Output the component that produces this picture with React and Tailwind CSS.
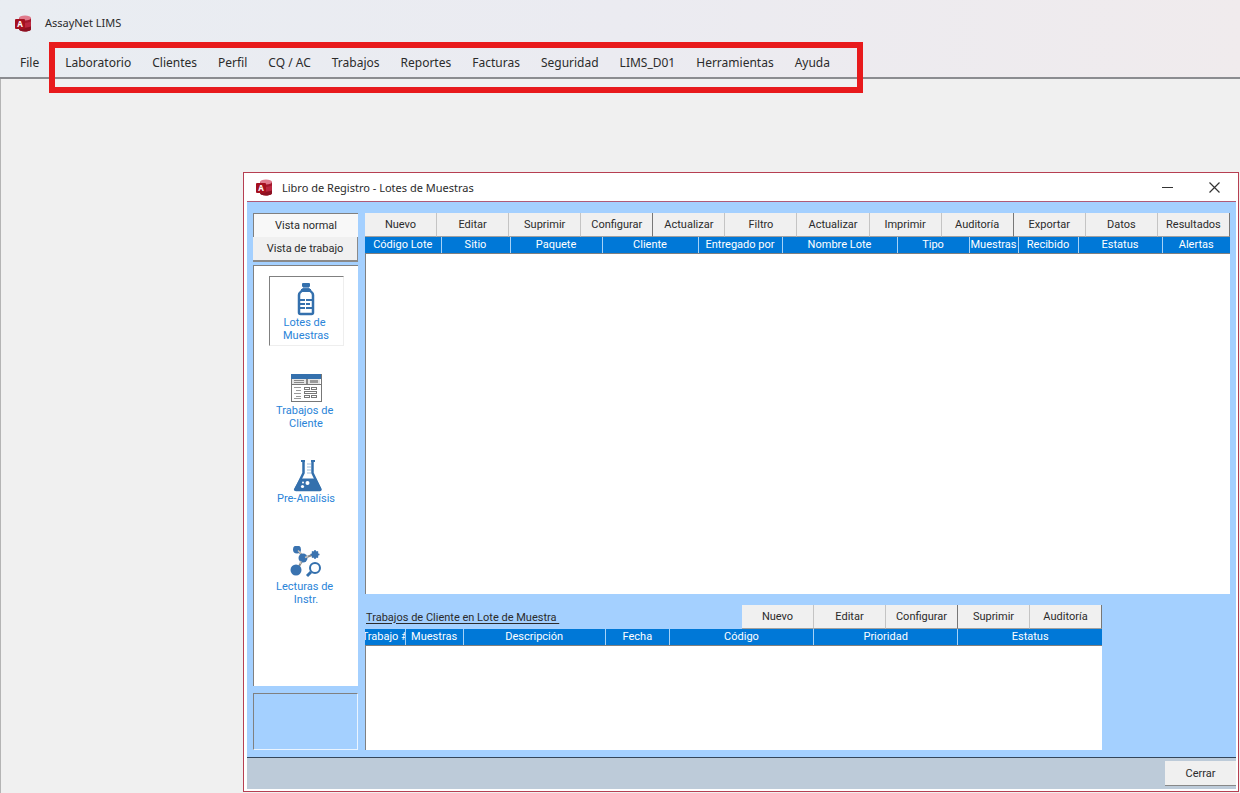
import React from "react";

const menus = [
  "Laboratorio",
  "Clientes",
  "Perfil",
  "CQ / AC",
  "Trabajos",
  "Reportes",
  "Facturas",
  "Seguridad",
  "LIMS_D01",
  "Herramientas",
  "Ayuda",
];

// "end" closes a group of buttons with a darker edge
const batchActions = [
  { label: "Nuevo" },
  { label: "Editar" },
  { label: "Suprimir" },
  { label: "Configurar", end: true },
  { label: "Actualizar" },
  { label: "Filtro" },
  { label: "Actualizar" },
  { label: "Imprimir" },
  { label: "Auditoría", end: true },
  { label: "Exportar" },
  { label: "Datos" },
  { label: "Resultados", end: true },
];

const jobActions = [
  { label: "Nuevo" },
  { label: "Editar" },
  { label: "Configurar", end: true },
  { label: "Suprimir" },
  { label: "Auditoría", end: true },
];

const batchColumns = [
  { label: "Código Lote", width: "w-[76px]" },
  { label: "Sitio", width: "w-[69px]" },
  { label: "Paquete", width: "w-[92px]" },
  { label: "Cliente", width: "w-[96px]" },
  { label: "Entregado por", width: "w-[84px]" },
  { label: "Nombre Lote", width: "w-[115px]" },
  { label: "Tipo", width: "w-[72px]" },
  { label: "Muestras", width: "w-[49px]" },
  { label: "Recibido", width: "w-[60px]" },
  { label: "Estatus", width: "w-[84px]" },
  { label: "Alertas", width: "w-[68px]" },
];

const jobColumns = [
  { label: "Trabajo #", width: "w-[40px]" },
  { label: "Muestras", width: "w-[58px]" },
  { label: "Descripción", width: "w-[142px]" },
  { label: "Fecha", width: "w-[64px]" },
  { label: "Código", width: "w-[144px]" },
  { label: "Prioridad", width: "w-[144px]" },
  { label: "Estatus", width: "w-[144px]" },
];

const AccessIcon = () => (
  <svg width="17" height="17" viewBox="0 0 17 17" aria-hidden="true">
    <path d="M5 3v11c0 1.500 2.500 2.500 6 2.500s6-1 6-2.500V3z" fill="#a3182c" />
    <path d="M5 7v4.500c2 1.500 9 1.500 12 0V6.500c-3 1.500-8 2-12 .5z" fill="#bb2740" />
    <path d="M5 12v2c0 1.500 2.500 2.500 6 2.500s6-1 6-2.500v-2.500c-3 1.500-8 2-12 .5z" fill="#8c1122" />
    <ellipse cx="11" cy="3" rx="6" ry="2.500" fill="#e07b8d" />
    <rect x="1" y="4" width="10" height="10" rx="1" fill="#a5101f" />
    <text x="6" y="12" textAnchor="middle" fontSize="8" fontWeight="700" fill="#fff" fontFamily="Noto Sans, sans-serif">
      A
    </text>
  </svg>
);

const BottleIcon = () => (
  <svg width="34" height="34" viewBox="0 0 34 34" fill="#3470ad" aria-hidden="true">
    <rect x="13" y="1" width="8" height="4" rx="1" />
    <rect x="14" y="5" width="6" height="2" fill="#7fa5cf" />
    <path
      d="M14 7.500C13 9.500 10 10 10 13v17.500c0 1 .8 1.500 1.500 1.500h11c.8 0 1.500-.5 1.500-1.500V13c0-3-3-3.500-4-5.500z"
      fill="none"
      stroke="#3470ad"
      strokeWidth="2.500"
    />
    <rect x="12" y="7" width="10" height="3" />
    <rect x="10" y="17" width="6" height="2" />
    <rect x="17" y="17" width="7" height="2" />
    <rect x="10" y="21" width="6" height="2" />
    <rect x="17" y="21" width="4" height="2" />
    <rect x="10" y="25" width="6" height="2" />
    <rect x="17" y="25" width="7" height="2" />
    <rect x="10" y="31" width="14" height="2" />
  </svg>
);

const FormIcon = () => (
  <svg width="34" height="34" viewBox="0 0 34 34" shapeRendering="crispEdges" aria-hidden="true">
    <rect x="2" y="4" width="30" height="27" fill="#fff" stroke="#777" />
    <rect x="2" y="4" width="30" height="5" fill="#3470ad" />
    <rect x="3" y="9" width="28" height="5" fill="#e4e4e4" />
    <rect x="5" y="10" width="10" height="1" fill="#888" />
    <rect x="5" y="12" width="10" height="1" fill="#888" />
    <rect x="17" y="9" width="2" height="6" fill="#888" />
    <rect x="21" y="10" width="8" height="3" fill="#999" />
    <rect x="2" y="14" width="30" height="1" fill="#777" />
    <g fill="#999">
      <rect x="5" y="17" width="7" height="1" />
      <rect x="7" y="20" width="5" height="1" />
      <rect x="5" y="23" width="7" height="1" />
      <rect x="7" y="26" width="5" height="1" />
      <rect x="5" y="28" width="7" height="1" />
    </g>
    <g fill="none" stroke="#777">
      <rect x="15.500" y="17.500" width="5" height="2" />
      <rect x="22.500" y="17.500" width="5" height="2" />
      <rect x="15.500" y="21.500" width="12" height="2" />
      <rect x="15.500" y="25.500" width="5" height="2" />
      <rect x="22.500" y="25.500" width="5" height="2" />
    </g>
  </svg>
);

const FlaskIcon = () => (
  <svg width="34" height="34" viewBox="0 0 34 34" aria-hidden="true">
    <path d="M12 3h4M22 3h4" stroke="#3470ad" strokeWidth="2" />
    <path d="M14.500 3v12L7 30.500c-.5 1 0 1.500 1 1.500h22c1 0 1.500-.5 1-1.500L23.500 15V3" fill="none" stroke="#3470ad" strokeWidth="2.500" />
    <path d="M18 6h4M18 9h4M18 12h4M18 15h4" stroke="#9dbbda" />
    <path d="M11 20.500h16l5.500 10.500c.5 1.500-.5 2-1.500 2H7c-1.500 0-2.500-.5-2-2z" fill="#3470ad" />
    <circle cx="18.500" cy="25" r="2" fill="#fff" />
    <circle cx="13.500" cy="28.500" r="1.600" fill="#fff" />
    <circle cx="14" cy="24.500" r="1" fill="#fff" />
  </svg>
);

const MoleculeIcon = () => (
  <svg width="34" height="34" viewBox="0 0 34 34" aria-hidden="true">
    <path d="M8 3l7 9 11-4M14 13L8 24" fill="none" stroke="#8a8a8a" strokeWidth="2" />
    <g fill="#3a73b0">
      <circle cx="8" cy="3.500" r="4" />
      <circle cx="14" cy="12" r="4.500" />
      <circle cx="26" cy="8.500" r="3.500" />
      <circle cx="7" cy="24" r="5.500" />
    </g>
    <path d="M26 4v9M21.500 8.500h9M23 5.500l6 6M29 5.500l-6 6" stroke="#3a73b0" strokeWidth="1.500" />
    <path d="M9 4.500l3 3M16 11.500l3-1M12 15l-1 3" stroke="#c9c4bd" strokeWidth="1.500" />
    <circle cx="26" cy="22" r="5" fill="none" stroke="#3470ad" strokeWidth="2" />
    <path d="M22 26l-4 4" stroke="#3470ad" strokeWidth="3" />
  </svg>
);

const sections = [
  { label: "Lotes de \nMuestras", Icon: BottleIcon, active: true },
  { label: "Trabajos de \nCliente", Icon: FormIcon },
  { label: "Pre-Analísis", Icon: FlaskIcon },
  { label: "Lecturas de \nInstr.", Icon: MoleculeIcon },
];

const Toolbar = ({ actions }) => (
  <div className="flex">
    {actions.map((action, i) => (
      <button
        key={i}
        type="button"
        className={`h-6 min-w-[72px] flex-1 border-r border-b border-b-[#a0a0a0] bg-[#f0f0f0] text-center ${
          action.end ? "border-r-[#777]" : "border-r-[#c4c4c4]"
        }`}
      >
        {action.label}
      </button>
    ))}
  </div>
);

const ListView = ({ columns, label, className }) => (
  <div className={`flex flex-col ${className}`}>
    <table className="w-full table-fixed border-collapse bg-[#0078d7] text-white" aria-label={label}>
      <thead>
        <tr>
          {columns.map((col) => (
            <th
              key={col.label}
              className={`${col.width} h-4 overflow-hidden border-r border-[#a6d2f7] p-0 font-normal last:border-r-0`}
            >
              <span className="flex justify-center overflow-hidden leading-4 whitespace-nowrap">{col.label}</span>
            </th>
          ))}
        </tr>
      </thead>
    </table>
    <div className="flex-1 border-t border-l border-[#808080] bg-white" />
  </div>
);

const App = () => {
  return (
    <div className="flex min-h-screen flex-col bg-[#f0f0f0] font-['Noto_Sans',sans-serif] text-[#2b2b2b]">
      <header className="border-b-2 border-[#8b8c90] bg-linear-to-r from-[#e9edf2] via-[#ebebf1] to-[#f0ebed]">
        <div className="flex h-[46px] items-center gap-[14px] pl-[14px] text-[11px]">
          <AccessIcon />
          <span>AssayNet LIMS</span>
        </div>
        <nav className="flex h-[31px] items-center pt-[2px] pl-5 text-[12px] leading-5 whitespace-nowrap">
          <a href="#file">File</a>
          <div className="relative ml-[26px] flex gap-[21px]">
            {menus.map((menu) => (
              <a key={menu} href={`#${menu}`}>
                {menu}
              </a>
            ))}
            <div className="pointer-events-none absolute -top-[11px] -right-[33px] -bottom-5 -left-4 border-6 border-[#e81a1c]" />
          </div>
        </nav>
      </header>

      <main className="flex flex-1 flex-col border-l border-[#b4b4b4] pt-[93px] pb-px pl-[242px]">
        <section className="mr-px flex flex-1 flex-col border border-[#b63f52] bg-white pr-[2px] pb-[2px] pl-[3px] font-['Roboto',sans-serif] text-[11px] leading-[13px]">
          <div className="flex h-7 items-center gap-[10px] pr-4 pl-2">
            <AccessIcon />
            <h1 className="flex-1 font-['Noto_Sans',sans-serif]">Libro de Registro - Lotes de Muestras</h1>
            <div className="flex items-center gap-9">
              <button type="button" aria-label="Minimizar">
                <svg width="11" height="11" viewBox="0 0 11 11" stroke="#333">
                  <path d="M0 5.500h11" />
                </svg>
              </button>
              <button type="button" aria-label="Cerrar ventana">
                <svg width="11" height="11" viewBox="0 0 11 11" stroke="#333" strokeWidth="1.200">
                  <path d="M.5.5l10 10M10.500.5l-10 10" />
                </svg>
              </button>
            </div>
          </div>

          <div className="flex flex-1 gap-[7px] border-t border-[#b05a76] bg-[#a4d0ff] px-[6px] pt-[11px] pb-[7px]">
            <aside className="flex w-[105px] shrink-0 flex-col">
              <button type="button" className="h-6 border-t border-l border-[#808080] bg-[#f8f8f8]">
                Vista normal
              </button>
              <button type="button" className="h-[25px] border-r border-b-2 border-[#8a8a8a] bg-[#f0f0f0]">
                Vista de trabajo
              </button>
              <div className="mt-[3px] flex flex-1 flex-col items-center gap-[18px] border-t border-l border-[#808080] bg-white pt-[10px] pb-5">
                {sections.map(({ label, Icon, active }) => (
                  <button
                    key={label}
                    type="button"
                    className={`flex h-[70px] w-[75px] flex-col items-center border pt-[5px] whitespace-pre text-[#2a84d8] ${
                      active ? "border-t-[#808080] border-r-[#eee] border-b-[#eee] border-l-[#808080]" : "border-transparent"
                    }`}
                  >
                    <Icon />
                    <span>{label}</span>
                  </button>
                ))}
              </div>
              <div className="mt-[7px] h-[57px] border border-t-[#808080] border-r-[#eaf4ff] border-b-[#eaf4ff] border-l-[#808080]" />
            </aside>

            <div className="flex min-w-0 flex-1 flex-col">
              <Toolbar actions={batchActions} />
              <ListView columns={batchColumns} label="Lotes de Muestras" className="flex-1" />

              <div className="mt-[11px] w-[737px] max-w-full">
                <div className="flex items-center justify-between">
                  <h2 className="pl-px whitespace-pre underline underline-offset-2">Trabajos de Cliente en Lote de Muestra </h2>
                  <Toolbar actions={jobActions} />
                </div>
                <ListView columns={jobColumns} label="Trabajos de Cliente" className="h-[121px]" />
              </div>
            </div>
          </div>

          <footer className="flex justify-end border-t border-[#34465a] bg-[#bdcbd9] pt-[3px] pb-[3px]">
            <button type="button" className="h-[25px] w-[71px] border-b border-[#888] bg-[#f0f0f0]">
              Cerrar
            </button>
          </footer>
        </section>
      </main>
    </div>
  );
};

export default App;
